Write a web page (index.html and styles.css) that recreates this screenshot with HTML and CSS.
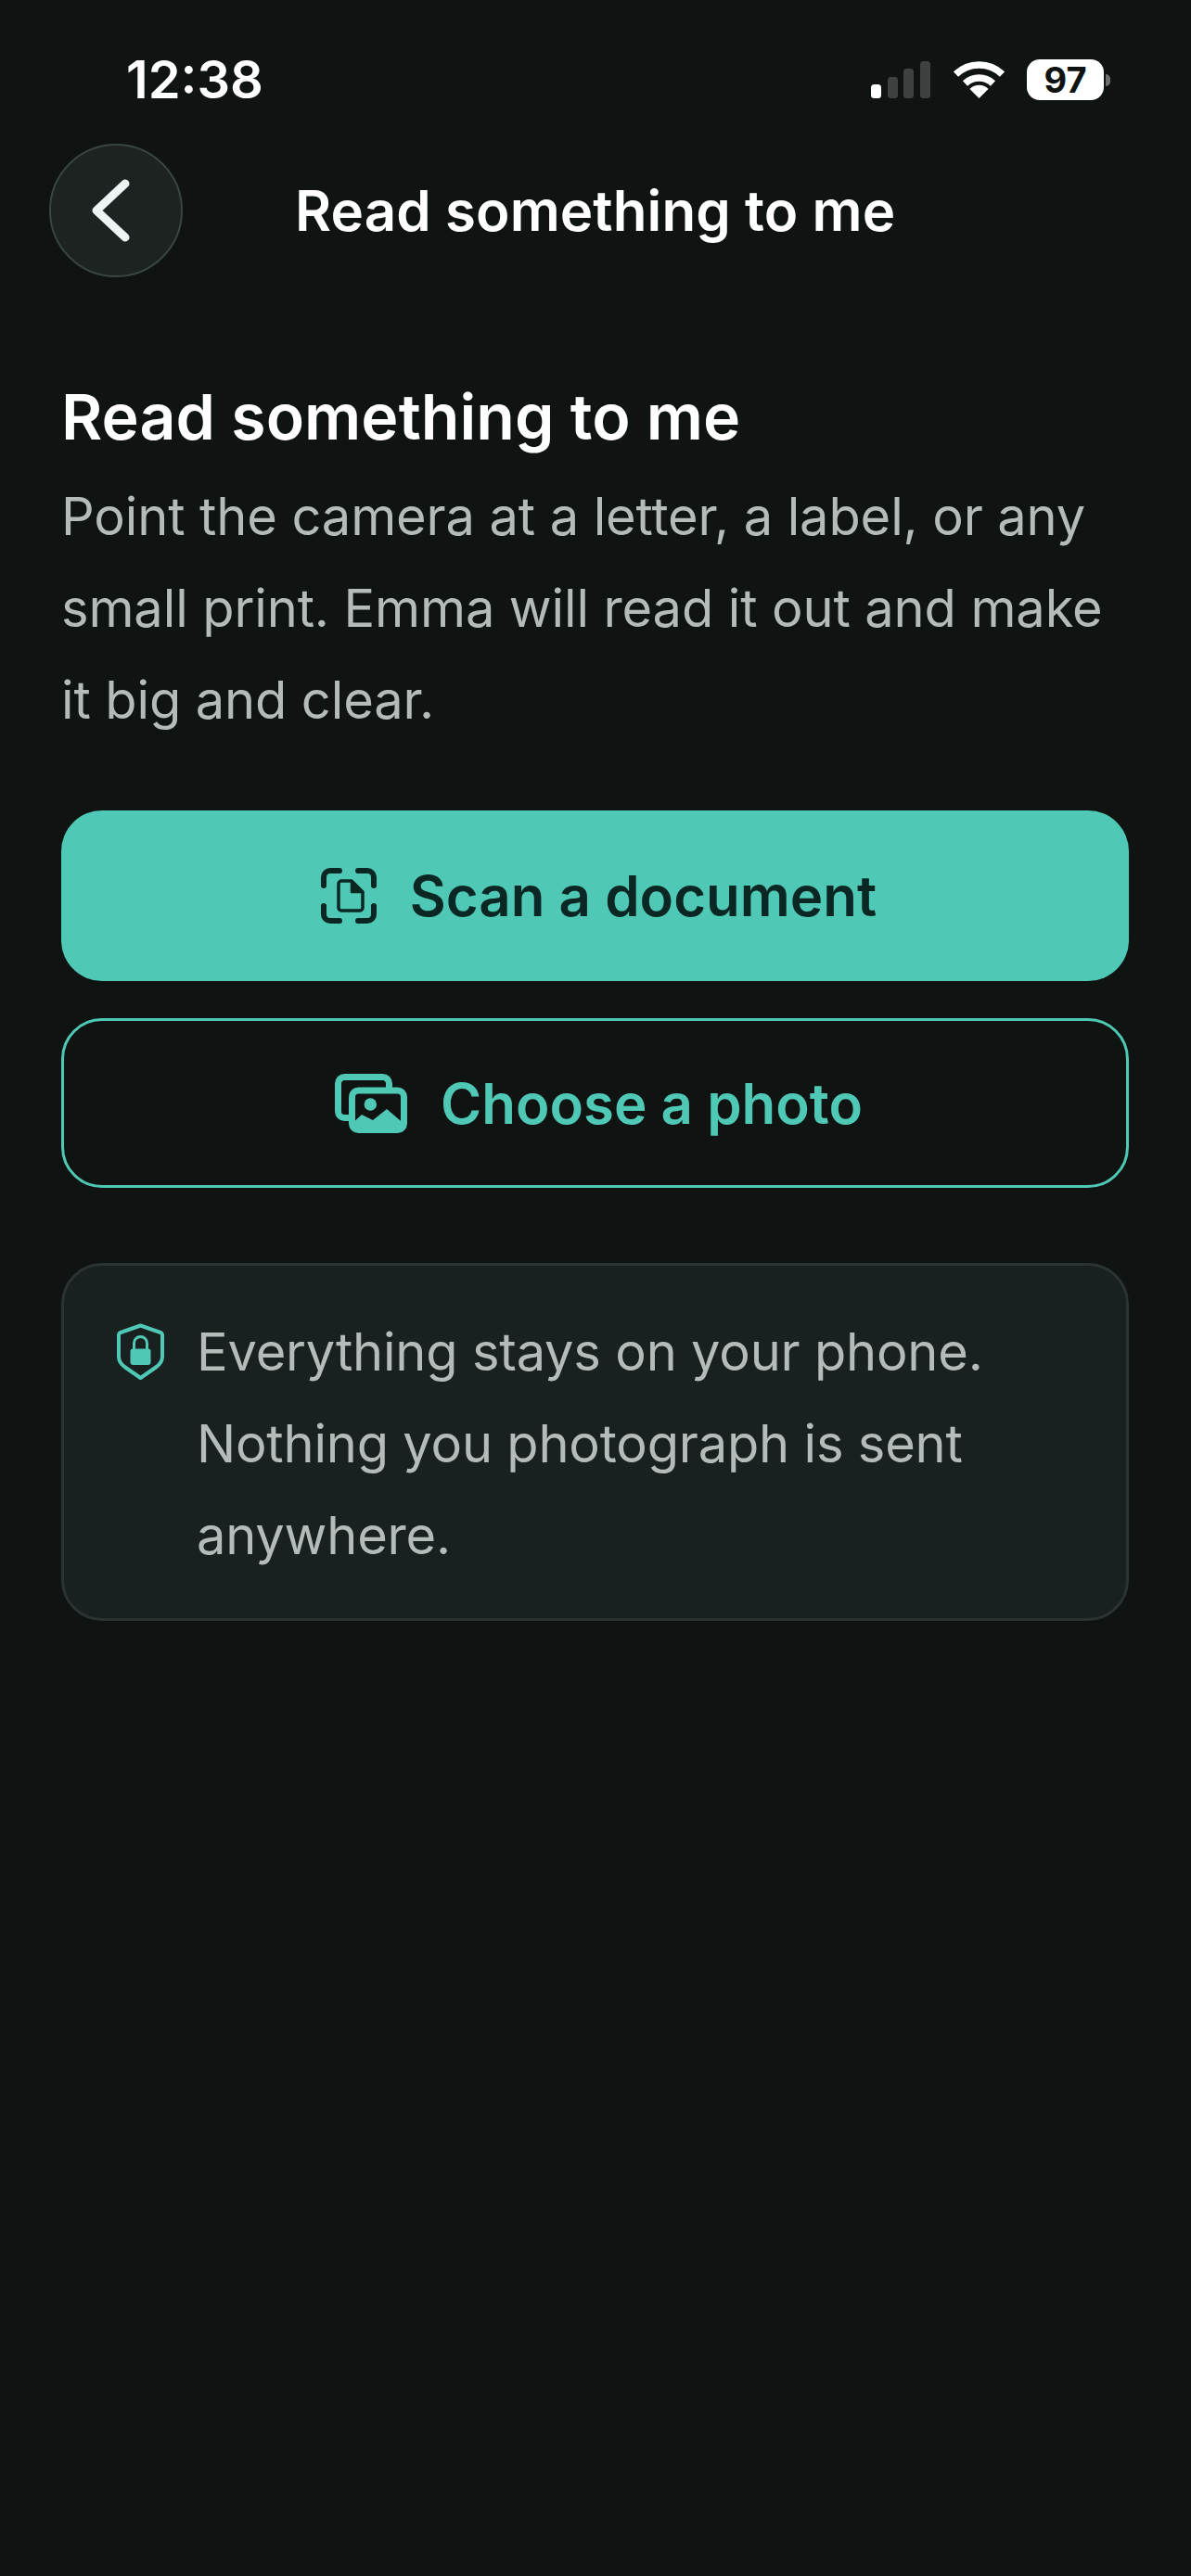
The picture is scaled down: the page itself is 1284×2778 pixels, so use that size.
FILE: index.html
```html
<!DOCTYPE html>
<html lang="en">
<head>
  <meta charset="UTF-8">
  <title>Read something to me</title>
  <link rel="stylesheet" href="styles.css">
</head>
<body>
  <div class="status-bar">
    <span class="time">12:38</span>
    <div class="status-icons">
      <svg class="signal" width="64" height="40" viewBox="0 0 64 40">
        <rect x="0" y="25" width="11" height="15" rx="3.5" fill="#fff"/>
        <rect x="18" y="17" width="11" height="23" rx="3.5" fill="#3d4241"/>
        <rect x="35" y="8" width="11" height="32" rx="3.5" fill="#3d4241"/>
        <rect x="53" y="0" width="11" height="40" rx="3.5" fill="#3d4241"/>
      </svg>
      <svg class="wifi" width="55" height="40" viewBox="0 0 55 40">
        <path d="M2.5 14 A36 36 0 0 1 52.5 14" fill="none" stroke="#fff" stroke-width="7.5"/>
        <path d="M12.5 24 A22 22 0 0 1 42.5 24" fill="none" stroke="#fff" stroke-width="7.5"/>
        <path d="M27.5 40 L17.5 30 A14 14 0 0 1 37.5 30 Z" fill="#fff"/>
      </svg>
      <div class="battery">
        <span class="battery-level">97</span>
        <span class="battery-cap"></span>
      </div>
    </div>
  </div>

  <header class="top-bar">
    <button class="back-btn">
      <svg width="44" height="72" viewBox="0 0 44 72">
        <path d="M38 7 L7 36 L38 65" fill="none" stroke="#eef4f3" stroke-width="9" stroke-linecap="round" stroke-linejoin="round"/>
      </svg>
    </button>
    <div class="top-title">Read something to me</div>
  </header>

  <main class="content">
    <h1>Read something to me</h1>
    <p class="intro">Point the camera at a letter, a label, or any small print. Emma will read it out and make it big and clear.</p>

    <button class="btn btn-primary">
      <svg width="60" height="60" viewBox="0 0 60 60" fill="none" stroke="#0a2723" stroke-linecap="round" stroke-linejoin="round">
        <path d="M3 19 V10 A7 7 0 0 1 10 3 H20 M40 3 H50 A7 7 0 0 1 57 10 V19 M57 41 V50 A7 7 0 0 1 50 57 H40 M20 57 H10 A7 7 0 0 1 3 50 V41" stroke-width="6"/>
        <path d="M19 17 A3 3 0 0 1 22 14 H33 L45 26 V43 A3 3 0 0 1 42 46 H22 A3 3 0 0 1 19 43 Z" stroke-width="3.5"/>
        <path d="M33 14 V26 H45 Z" fill="#0a2723" stroke-width="2.5"/>
      </svg>
      <span>Scan a document</span>
    </button>

    <button class="btn btn-outline">
      <svg width="78" height="64" viewBox="0 0 78 64" fill="none">
        <path d="M15 47.5 H10.5 A7 7 0 0 1 3.5 40.5 V10.5 A7 7 0 0 1 10.5 3.5 H51.5 A7 7 0 0 1 58.5 10.5 V15" stroke="#4fc9b5" stroke-width="7"/>
        <rect x="18.5" y="18" width="56" height="42.5" rx="7" stroke="#4fc9b5" stroke-width="7"/>
        <circle cx="38.3" cy="33" r="6.7" fill="#4fc9b5"/>
        <path d="M20 53 L22.5 50 L29 44 L41 50 L56 38 L70 50 L74 53 V60 H20 Z" fill="#4fc9b5"/>
      </svg>
      <span>Choose a photo</span>
    </button>

    <div class="privacy-card">
      <svg class="shield" width="51" height="62" viewBox="0 0 51 62" fill="none">
        <path d="M25.5 2.5 L47 10 A3 3 0 0 1 49 12.5 V36 C49 41 47 44 42 47.5 L25.5 59 L9 47.5 C4 44 2 41 2 36 V12.5 A3 3 0 0 1 4 10 Z" stroke="#4fc9b5" stroke-width="4" stroke-linejoin="round"/>
        <path d="M18.5 30 V21.5 A7 7 0 0 1 32.5 21.5 V30" stroke="#4fc9b5" stroke-width="3"/>
        <rect x="14.5" y="27.5" width="22" height="17.5" rx="3" fill="#4fc9b5"/>
      </svg>
      <p>Everything stays on your phone. Nothing you photograph is sent anywhere.</p>
    </div>
  </main>
</body>
</html>
```

FILE: styles.css
```css
* {
  box-sizing: border-box;
}

body {
  margin: 0;
  width: 1284px;
  height: 2778px;
  overflow: hidden;
  background-color: #0f1413;
  color: #fff;
  font-family: Inter, "Noto Sans", sans-serif;
}

.status-bar {
  display: flex;
  justify-content: space-between;
  align-items: center;
  height: 112px;
  padding: 60px 87px 0 136px;
}

.time {
  font-size: 56px;
  font-weight: 600;
  line-height: 52px;
}

.status-icons {
  display: flex;
  align-items: center;
}

.signal {
  margin-right: 25px;
}

.wifi {
  margin-right: 24px;
}

.battery {
  display: flex;
  align-items: center;
}

.battery-level {
  display: block;
  width: 83px;
  height: 44px;
  border-radius: 14px;
  background: #fff;
  color: #0f1413;
  font-size: 38px;
  font-weight: 700;
  line-height: 44px;
  text-align: center;
}

.battery-cap {
  display: block;
  width: 5px;
  height: 13px;
  margin-left: 2px;
  border-radius: 0 7px 7px 0;
  background: #6a6e6d;
}

.top-bar {
  display: flex;
  align-items: center;
  height: 144px;
  margin-top: 43px;
  padding-left: 53px;
}

.back-btn {
  display: flex;
  align-items: center;
  justify-content: center;
  width: 144px;
  height: 144px;
  padding: 0 12px 0 0;
  border: 2px solid #384543;
  border-radius: 50%;
  background: #1c2321;
}

.top-title {
  margin-left: 121px;
  font-size: 60px;
  font-weight: 600;
  letter-spacing: 0.1px;
}

.content {
  padding: 0 67px 0 66px;
  margin-top: 110px;
}

h1 {
  margin: 0;
  font-size: 68px;
  font-weight: 600;
  line-height: 80px;
  letter-spacing: 0.05px;
}

.intro {
  margin: 19px 0 0;
  color: #b5bbb9;
  font-size: 56px;
  line-height: 99px;
  letter-spacing: -0.12px;
}

.btn {
  display: flex;
  align-items: center;
  justify-content: center;
  width: 100%;
  padding: 0 0 0 8px;
  font-family: inherit;
  font-size: 60px;
  font-weight: 600;
}

.btn-primary {
  gap: 36px;
  height: 184px;
  margin-top: 69px;
  border: 0;
  border-radius: 44px;
  background: #4fc9b5;
  color: #0a2723;
}

.btn-outline {
  gap: 36px;
  height: 183px;
  margin-top: 40px;
  border: 3px solid #4fc9b5;
  border-radius: 44px;
  background: transparent;
  color: #4fc9b5;
}

.privacy-card {
  display: flex;
  align-items: flex-start;
  gap: 35px;
  height: 386px;
  margin-top: 81px;
  padding: 44px 56px 0 57px;
  border: 3px solid #2a3332;
  border-radius: 44px;
  background: #192120;
}

.shield {
  flex-shrink: 0;
  margin-top: 18px;
}

.privacy-card p {
  margin: 0;
  color: #b5bbb9;
  font-size: 56px;
  line-height: 99px;
  letter-spacing: -0.2px;
}
```
